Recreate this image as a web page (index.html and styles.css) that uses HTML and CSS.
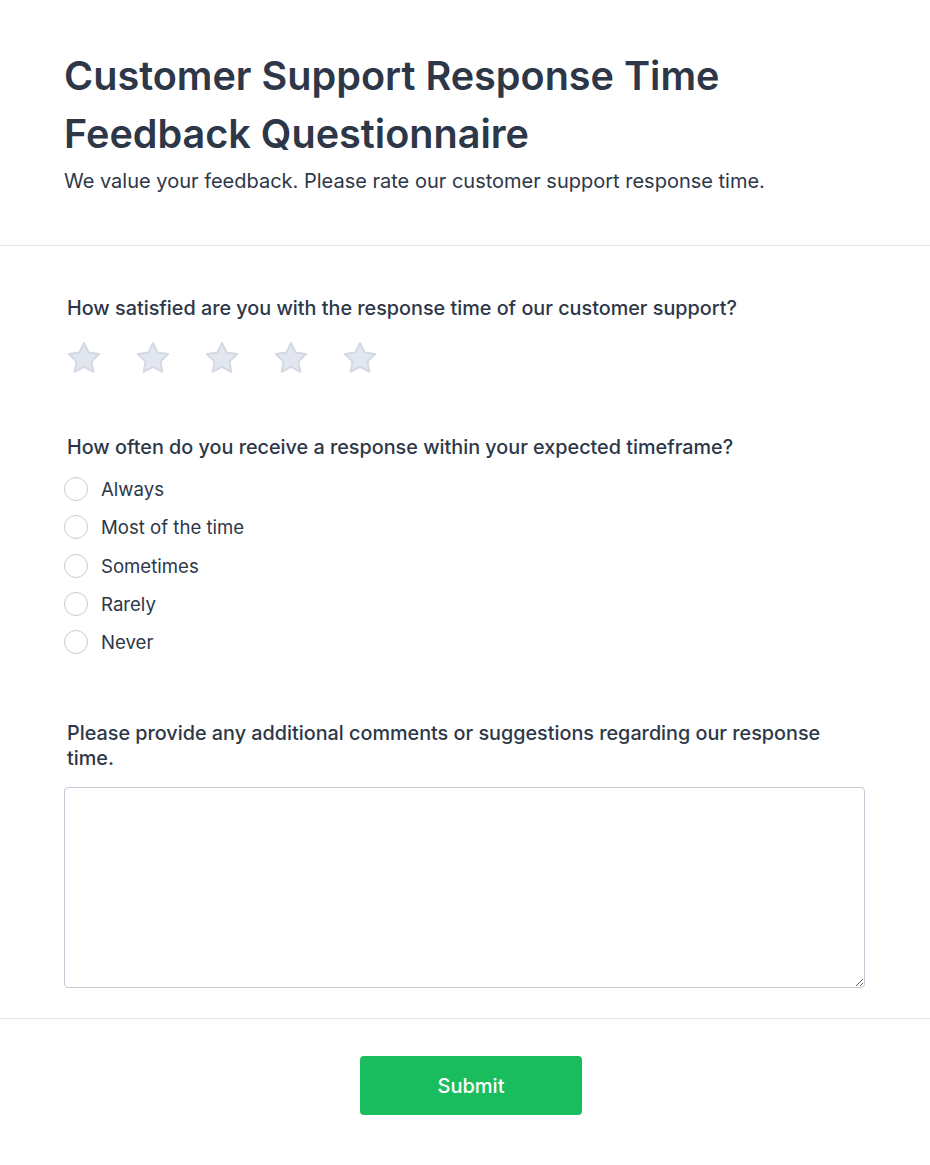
FILE: index.html
```html
<!DOCTYPE html>
<html lang="en">
<head>
  <meta charset="UTF-8">
  <meta name="viewport" content="width=device-width, initial-scale=1">
  <title>Customer Support Response Time Feedback Questionnaire</title>
  <link rel="stylesheet" href="styles.css">
</head>
<body>

  <header class="form-header">
    <h1>Customer Support Response Time Feedback Questionnaire</h1>
    <p>We value your feedback. Please rate our customer support response time.</p>
  </header>

  <main class="form-body">
    <section class="question rating">
      <label class="question-label">How satisfied are you with the response time of our customer support?</label>
      <div class="stars">
        <svg class="star" viewBox="0 0 24 24"><path d="M12 3l2.8 5.7 6.3.9-4.55 4.45 1.07 6.25L12 17.35l-5.62 2.95 1.07-6.25L2.9 9.6l6.3-.9z"/></svg>
        <svg class="star" viewBox="0 0 24 24"><path d="M12 3l2.8 5.7 6.3.9-4.55 4.45 1.07 6.25L12 17.35l-5.62 2.95 1.07-6.25L2.9 9.6l6.3-.9z"/></svg>
        <svg class="star" viewBox="0 0 24 24"><path d="M12 3l2.8 5.7 6.3.9-4.55 4.45 1.07 6.25L12 17.35l-5.62 2.95 1.07-6.25L2.9 9.6l6.3-.9z"/></svg>
        <svg class="star" viewBox="0 0 24 24"><path d="M12 3l2.8 5.7 6.3.9-4.55 4.45 1.07 6.25L12 17.35l-5.62 2.95 1.07-6.25L2.9 9.6l6.3-.9z"/></svg>
        <svg class="star" viewBox="0 0 24 24"><path d="M12 3l2.8 5.7 6.3.9-4.55 4.45 1.07 6.25L12 17.35l-5.62 2.95 1.07-6.25L2.9 9.6l6.3-.9z"/></svg>
      </div>
    </section>

    <section class="question choice">
      <label class="question-label">How often do you receive a response within your expected timeframe?</label>
      <div class="options">
        <label class="option"><input type="radio" name="often"><span>Always</span></label>
        <label class="option"><input type="radio" name="often"><span>Most of the time</span></label>
        <label class="option"><input type="radio" name="often"><span>Sometimes</span></label>
        <label class="option"><input type="radio" name="often"><span>Rarely</span></label>
        <label class="option"><input type="radio" name="often"><span>Never</span></label>
      </div>
    </section>

    <section class="question">
      <label class="question-label" for="comments">Please provide any additional comments or suggestions regarding our response time.</label>
      <textarea id="comments"></textarea>
    </section>
  </main>

  <footer class="form-footer">
    <button type="submit">Submit</button>
  </footer>

</body>
</html>
```

FILE: styles.css
```css
* { margin: 0; padding: 0; box-sizing: border-box; }
body {
  font-family: Inter, "Noto Sans", sans-serif;
  color: #2d3748;
  background: #fff;
}

.form-header {
  padding: 48px 64px 50px;
  border-bottom: 1px solid #e2e8f0;
}
.form-header h1 {
  font-size: 39.6px;
  line-height: 57.6px;
  font-weight: 600;
  max-width: 700px;
}
.form-header p {
  font-size: 20px;
  line-height: 28px;
  margin-top: 4px;
}

.form-body {
  padding: 50px 64px 30px;
  border-bottom: 1px solid #e2e8f0;
}
.question.rating { margin-bottom: 57px; }
.question.choice { margin-bottom: 67px; }
.question-label {
  display: block;
  font-size: 19.8px;
  line-height: 25px;
  font-weight: 500;
  padding-left: 3px;
  padding-right: 20px;
}

.stars {
  display: flex;
  gap: 29px;
  margin-top: 17px;
}
.star {
  width: 40px;
  height: 40px;
  fill: #e2e6ee;
  stroke: #d3d8e2;
  stroke-width: 1.1;
  stroke-linejoin: round;
}

.options {
  display: flex;
  flex-direction: column;
  gap: 14.3px;
  margin-top: 17px;
}
.option {
  display: flex;
  align-items: center;
  gap: 13px;
  font-size: 18.6px;
  line-height: 24px;
}
.option input {
  appearance: none;
  width: 24px;
  height: 24px;
  border: 1px solid #c7cbd5;
  border-radius: 50%;
  background: #fff;
  flex-shrink: 0;
}

textarea {
  display: block;
  width: 801px;
  height: 201px;
  margin-top: 16px;
  border: 1px solid #c5c9d5;
  border-radius: 4px;
  font-family: inherit;
  font-size: 16px;
  padding: 8px 12px;
  resize: vertical;
}

.form-footer {
  display: flex;
  justify-content: center;
  padding: 37px 0 50px 12px;
}
.form-footer button {
  width: 222px;
  height: 59px;
  border: none;
  border-radius: 4px;
  background: #1abd5d;
  color: #fff;
  font-family: inherit;
  font-size: 20px;
  font-weight: 500;
  cursor: pointer;
}
```
